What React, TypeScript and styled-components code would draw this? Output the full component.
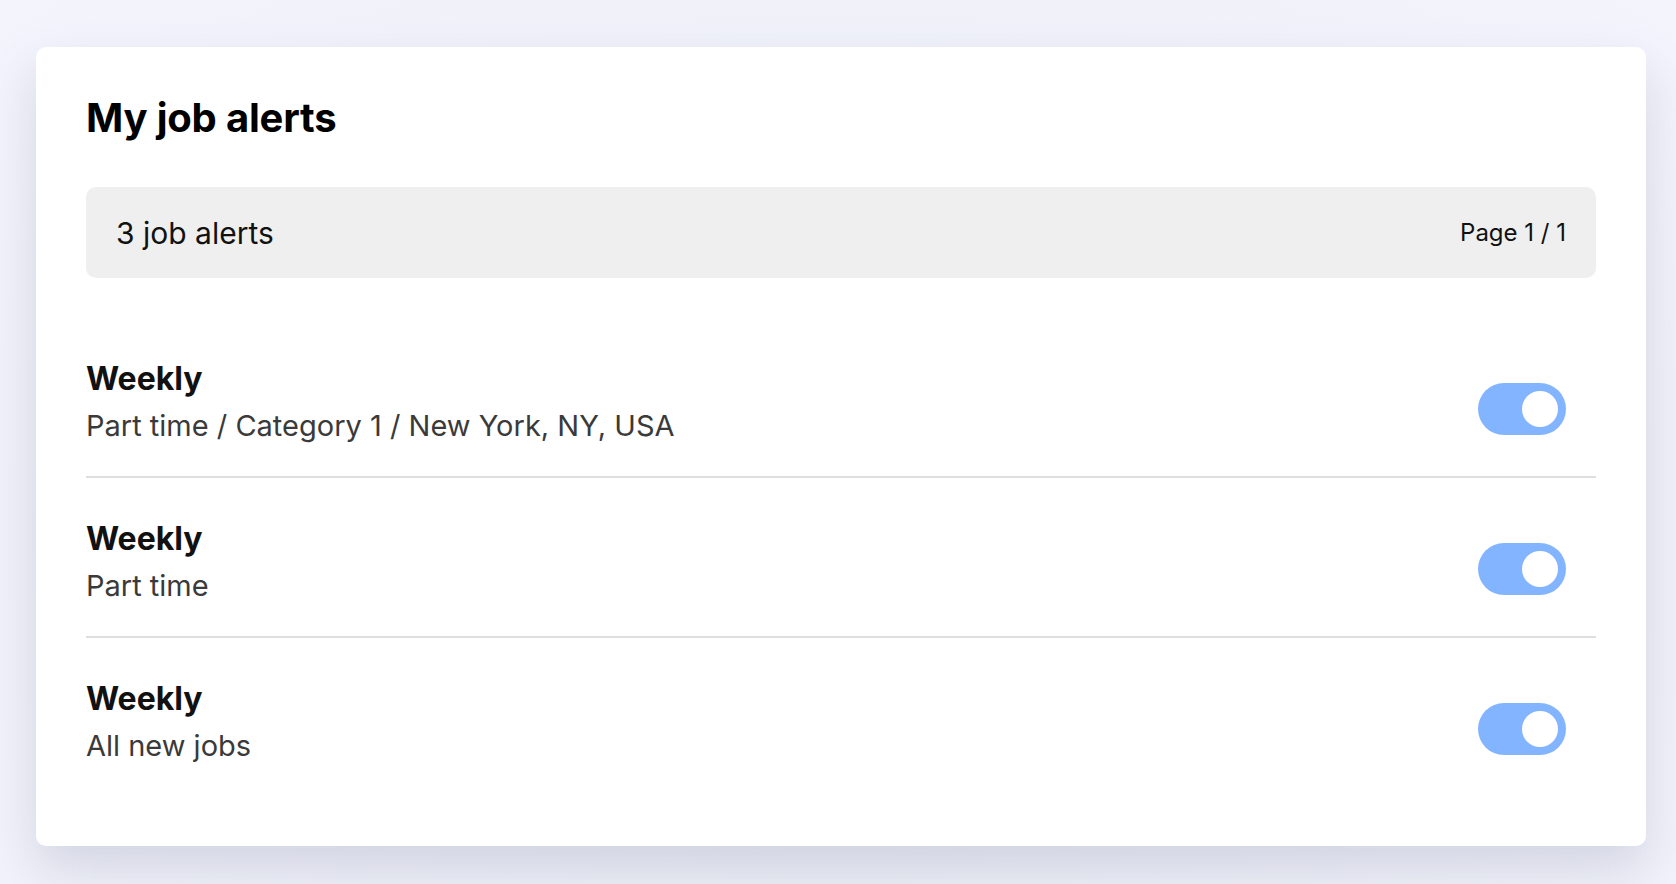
import React, { useState } from 'react';
import styled, { createGlobalStyle } from 'styled-components';

const GlobalStyle = createGlobalStyle`
  html, body {
    margin: 0;
    padding: 0;
  }
  body {
    font-family: Inter, "Noto Sans", "Liberation Sans", sans-serif;
    background: #f1f2fa;
    color: #111;
  }
`;

const Page = styled.div`
  min-height: 884px;
  box-sizing: border-box;
  padding: 47px 30px 30px 36px;
  background: radial-gradient(ellipse at 50% 60%, #e6e8f1 0%, #eef0f8 55%, #f3f4fc 100%);
`;

const Card = styled.section`
  width: 1610px;
  box-sizing: border-box;
  padding: 45px 50px 50px;
  background: #fff;
  border-radius: 10px;
  box-shadow: 0 24px 48px rgba(120, 126, 160, 0.24);
`;

const Title = styled.h1`
  margin: 0 0 43px;
  font-size: 40px;
  line-height: 52px;
  font-weight: 700;
  color: #000;
  letter-spacing: -0.2px;
`;

const SummaryBar = styled.div`
  display: flex;
  align-items: center;
  justify-content: space-between;
  height: 91px;
  padding: 0 30px;
  background: #efefef;
  border-radius: 10px;
`;

const Count = styled.span`
  font-size: 30px;
  color: #111;
`;

const PageInfo = styled.span`
  font-size: 24px;
  color: #111;
`;

const List = styled.ul`
  list-style: none;
  margin: 40px 0 0;
  padding: 0;
`;

const Row = styled.li`
  display: flex;
  align-items: center;
  justify-content: space-between;
  padding: 40px 30px 31px 0;
  border-bottom: 2px solid #dedede;

  &:last-child {
    border-bottom: none;
  }
`;

const Info = styled.div`
  display: flex;
  flex-direction: column;
  gap: 7px;
`;

const Frequency = styled.span`
  font-size: 32px;
  line-height: 42px;
  font-weight: 700;
  color: #111;
`;

const Criteria = styled.span`
  font-size: 29px;
  line-height: 38px;
  color: #3a3a3a;
`;

const Toggle = styled.button<{ $on: boolean }>`
  position: relative;
  flex-shrink: 0;
  width: 88px;
  height: 52px;
  margin-top: 14px;
  padding: 0;
  border: none;
  border-radius: 26px;
  background: ${(p) => (p.$on ? '#82b4ff' : '#cfd3dc')};
  cursor: pointer;

  &::after {
    content: '';
    position: absolute;
    top: 8px;
    left: ${(p) => (p.$on ? '44px' : '8px')};
    width: 36px;
    height: 36px;
    border-radius: 50%;
    background: #fff;
  }
`;

const alerts = [
  { id: 1, frequency: 'Weekly', criteria: 'Part time / Category 1 / New York, NY, USA' },
  { id: 2, frequency: 'Weekly', criteria: 'Part time' },
  { id: 3, frequency: 'Weekly', criteria: 'All new jobs' },
];

export default function App() {
  const [enabled, setEnabled] = useState<Record<number, boolean>>({ 1: true, 2: true, 3: true });

  return (
    <>
      <GlobalStyle />
      <Page>
        <Card>
          <Title>My job alerts</Title>
          <SummaryBar>
            <Count>{alerts.length} job alerts</Count>
            <PageInfo>Page 1 / 1</PageInfo>
          </SummaryBar>
          <List>
            {alerts.map((a) => (
              <Row key={a.id}>
                <Info>
                  <Frequency>{a.frequency}</Frequency>
                  <Criteria>{a.criteria}</Criteria>
                </Info>
                <Toggle
                  $on={enabled[a.id]}
                  aria-pressed={enabled[a.id]}
                  onClick={() => setEnabled((s) => ({ ...s, [a.id]: !s[a.id] }))}
                />
              </Row>
            ))}
          </List>
        </Card>
      </Page>
    </>
  );
}
